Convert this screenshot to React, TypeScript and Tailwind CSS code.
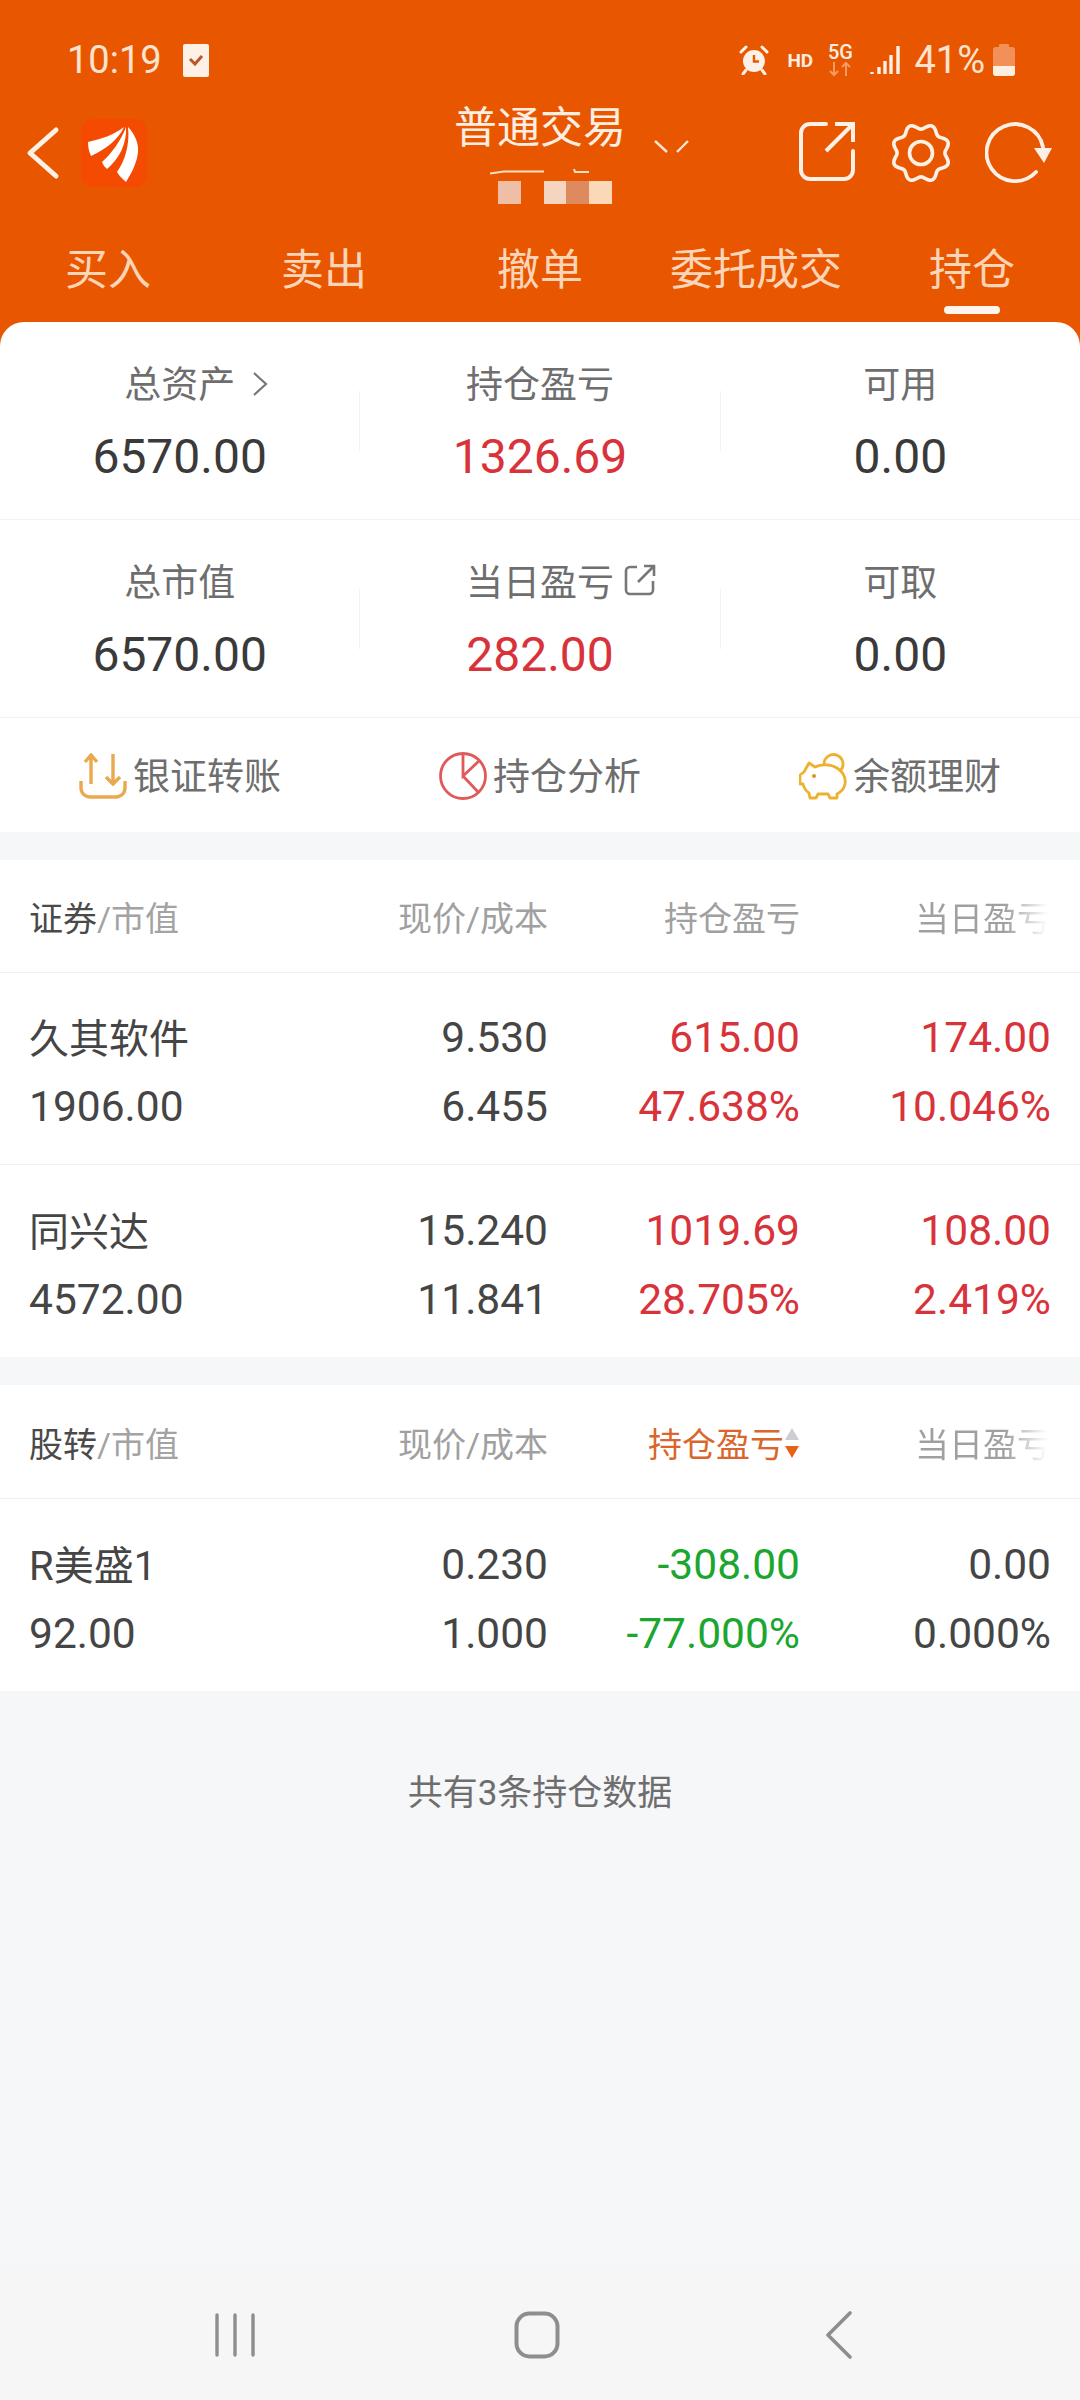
import React from 'react';

const FONT = "font-['Roboto','Noto_Sans_CJK_SC',sans-serif]";

// scalloped outline of the settings gear, 8 lobes
const gearPath = (() => {
  const pts: string[] = [];
  for (let i = 0; i < 160; i++) {
    const t = (i / 160) * Math.PI * 2;
    const r = 26.5 + 2.6 * Math.cos(8 * t + Math.PI);
    pts.push(`${(32 + r * Math.sin(t)).toFixed(2)} ${(32 - r * Math.cos(t)).toFixed(2)}`);
  }
  return `M${pts.join('L')}Z`;
})();

const StatusIcons: React.FC = () => (
  <div className="flex items-center">
    <svg width="30" height="30" viewBox="0 0 30 30" className="mr-[18px]">
      <circle cx="15" cy="16" r="11" fill="#fdf0e6" />
      <path d="M15 10v6.500h5" fill="none" stroke="#E85700" strokeWidth="2.400" />
      <path d="M2 7l5-5M28 7l-5-5M7 25l-3 4M23 25l3 4" stroke="#fdf0e6" strokeWidth="3" strokeLinecap="round" />
    </svg>
    <span className="mr-[15px] w-[26px] text-[19px] font-bold leading-none text-[#fdeee2]">HD</span>
    <div className="mr-[18px] flex w-[24px] flex-col items-center">
      <span className="text-[20px] font-medium leading-[17px] text-[#fdeee2]">5G</span>
      <svg width="24" height="16" viewBox="0 0 24 16">
        <path d="M6 1v13M2 10l4 4 4-4M18 15V2M14 6l4-4 4 4" fill="none" stroke="#f59a63" strokeWidth="2" />
      </svg>
    </div>
    <svg width="30" height="30" viewBox="0 0 30 30" className="mr-[14px]">
      <path d="M2 27v2M9 22v7M15 16v13M21 10v19M28 1v28" stroke="#fdeee2" strokeWidth="3.400" fill="none" />
    </svg>
    <span className="mr-[8px] text-[38px] leading-none text-[#fde3d0]">41%</span>
    <svg width="22" height="32" viewBox="0 0 22 32">
      <rect x="6" y="0" width="10" height="4" rx="1" fill="#f2905a" />
      <rect x="0" y="3" width="22" height="29" rx="3" fill="#f2905a" />
      <path d="M0 22h22v7a3 3 0 0 1-3 3H3a3 3 0 0 1-3-3z" fill="#fdeee2" />
    </svg>
  </div>
);

const Logo: React.FC = () => (
  <svg width="66" height="68" viewBox="0 0 66 68" className="rounded-[12px] bg-[#f54a02]">
    <path d="M7 23C20 20 33 16 43 8 38 20 25 30 10 37 8 33 7 28 7 23Z" fill="#fff" />
    <path d="M21 43C30 35 40 22 45 8c1 17-7 32-19 42-2-2-4-4-5-7Z" fill="#fff" />
    <path d="M36 53C44 42 49 25 47 8c7 7 11 17 10 25-1 11-7 22-12 30-3-3-7-6-9-10Z" fill="#fff" />
  </svg>
);

const Header: React.FC = () => {
  const tabs = ['买入', '卖出', '撤单', '委托成交', '持仓'];
  return (
    <div className="h-[346px] bg-[#E85700]">
      <div className="flex h-[104px] items-center justify-between pl-[67px] pr-[65px] pt-[16px]">
        <div className="flex items-center">
          <span className="text-[38px] leading-none text-[#fde3d0]">10:19</span>
          <span className="ml-[21px] flex h-[33px] w-[26px] items-center justify-center rounded-[2px] bg-[#fdf0e6]">
            <svg width="16" height="12" viewBox="0 0 16 12">
              <path d="M2 5l5 5 7-8" fill="none" stroke="#b8572a" strokeWidth="3" />
            </svg>
          </span>
        </div>
        <StatusIcons />
      </div>

      <div className="flex h-[98px] items-center pl-[26px]">
        <svg width="34" height="54" viewBox="0 0 34 54" className="mr-[21px]">
          <path d="M30 4L4 27l26 23" fill="none" stroke="#fdf0e6" strokeWidth="5" strokeLinecap="round" strokeLinejoin="round" />
        </svg>
        <Logo />
        <div className="ml-[307px] mt-[6px] flex w-[172px] flex-col items-center">
          <span className="text-[43px] leading-[40px] text-[#fdeee2]">普通交易</span>
          <svg width="100" height="7" viewBox="0 0 100 7" className="ml-[36px] mt-[20px] self-start">
            <path d="M0 5.500l14-2h40M84 1l1 3h14" fill="none" stroke="#fbdcc8" strokeWidth="2" />
          </svg>
          <div className="ml-[44px] mt-[6px] flex h-[23px] w-[114px] self-start">
            <span className="h-full w-[23px] bg-[#eebfa4]" />
            <span className="ml-[23px] h-full w-[22px] bg-[#f5d5c0]" />
            <span className="h-full w-[23px] bg-[#dc8a5e]" />
            <span className="h-full w-[23px] bg-[#fbd9b8]" />
          </div>
        </div>
        <svg width="36" height="14" viewBox="0 0 36 14" className="mb-[12px] ml-[27px]">
          <path d="M2 1l12 11M24 12L35 1" stroke="#fde3d0" strokeWidth="2.400" fill="none" />
        </svg>
        <svg width="58" height="64" viewBox="0 0 58 64" className="ml-[109px]">
          <path d="M28 3H12a9 9 0 0 0-9 9v37a9 9 0 0 0 9 9h34a9 9 0 0 0 9-9V30" fill="none" stroke="#fdf0e6" strokeWidth="4" strokeLinecap="round" />
          <path d="M28 30L54 4M37 3h18v18" fill="none" stroke="#fdf0e6" strokeWidth="4" />
        </svg>
        <svg width="64" height="64" viewBox="0 0 64 64" className="ml-[33px]">
          <path d={gearPath} fill="none" stroke="#fdf0e6" strokeWidth="3.600" strokeLinejoin="round" />
          <circle cx="32" cy="32" r="11.500" fill="none" stroke="#fdf0e6" strokeWidth="3.600" />
        </svg>
        <svg width="68" height="64" viewBox="0 0 68 64" className="ml-[32px]">
          <path d="M51 51A28.500 28.500 0 1 1 58 26" fill="none" stroke="#fdf0e6" strokeWidth="3.800" strokeLinecap="round" />
          <path d="M49 27h18l-8 15z" fill="#fdf0e6" />
        </svg>
      </div>

      <div className="grid h-[120px] grid-cols-5 items-center pt-[16px]">
        {tabs.map((t, i) => (
          <div key={t} className="relative flex justify-center">
            <span className="text-[43px] leading-none text-[#fcd4b8]">{t}</span>
            {i === 4 && (
              <span className="absolute left-1/2 top-[57px] h-[8px] w-[56px] -translate-x-1/2 rounded-full bg-[#fdf5ee]" />
            )}
          </div>
        ))}
      </div>
    </div>
  );
};

type Stat = { label: string; value: string; red?: boolean; extra?: React.ReactNode };

const StatRow: React.FC<{ items: Stat[] }> = ({ items }) => (
  <div className="flex h-[198px] items-center border-b border-[#f2f2f4]">
    {items.map((s, i) => (
      <React.Fragment key={s.label}>
        {i > 0 && <div className="h-[60px] w-px bg-[#f2f2f2]" />}
        <div className="flex flex-1 flex-col items-center pt-[4px]">
          <div className="relative flex h-[48px] items-center text-[37px] text-[#6e6e6e]">
            {s.label}
            {s.extra}
          </div>
          <div className={`mt-[20px] text-[48px] leading-[54px] ${s.red ? 'text-[#d8333b]' : 'text-[#3a3a3a]'}`}>{s.value}</div>
        </div>
      </React.Fragment>
    ))}
  </div>
);

const Actions: React.FC = () => (
  <div className="grid h-[114px] grid-cols-3 bg-white">
    <div className="flex items-center justify-center gap-[6px]">
      <svg width="48" height="46" viewBox="0 0 48 46" className="mt-[1px]">
        <path d="M2 28v7a9 9 0 0 0 9 9h26a9 9 0 0 0 9-9v-7" fill="none" stroke="#e9a94f" strokeWidth="3.400" />
        <path d="M12 31V2M6 9l6-7 6 7" fill="none" stroke="#e9a94f" strokeWidth="3.400" />
        <path d="M34 1v30M27 24l7 7 7-7" fill="none" stroke="#e9a94f" strokeWidth="3.400" />
      </svg>
      <span className="mt-[5px] text-[37px] text-[#6e6e6e]">银证转账</span>
    </div>
    <div className="flex items-center justify-center gap-[6px]">
      <svg width="48" height="48" viewBox="0 0 48 48" className="mt-[1px]">
        <circle cx="24" cy="24" r="22.500" fill="none" stroke="#e05a5c" strokeWidth="2.800" />
        <path d="M24 2v22L40 9M24 24l16 17" fill="none" stroke="#e05a5c" strokeWidth="2.800" />
      </svg>
      <span className="mt-[5px] text-[37px] text-[#6e6e6e]">持仓分析</span>
    </div>
    <div className="flex items-center justify-center gap-[6px]">
      <svg width="48" height="48" viewBox="0 0 48 48" className="mt-[1px]">
        <path d="M10 11l6 4c6-3 16-3 22 1 6 4 9 10 8 16-1 5-4 8-8 10v4h-7l-2-4H19l-2 4h-6l-1-5c-3-2-5-5-6-9H1v-9l4-3z" fill="none" stroke="#edb12e" strokeWidth="2.800" strokeLinejoin="round" />
        <path d="M25 12A9.500 9.500 0 1 1 41 19" fill="none" stroke="#edb12e" strokeWidth="2.800" />
        <circle cx="15" cy="24" r="2" fill="#d9942a" />
      </svg>
      <span className="mt-[5px] text-[37px] text-[#6e6e6e]">余额理财</span>
    </div>
  </div>
);

const COLS = 'grid grid-cols-[271px_248px_252px_251px] px-[29px]';

const TableHead: React.FC<{ first: string; active?: boolean }> = ({ first, active }) => (
  <div className={`${COLS} ${active ? 'h-[114px] pt-[8px]' : 'h-[113px] pt-[7px]'} items-center border-b border-[#f0f0f1] text-[34px]`}>
    <div className="text-[#a3a3a3]">
      <span className="text-[#4a4a4a]">{first}</span>/市值
    </div>
    <div className="text-right text-[#a0a0a0]">现价/成本</div>
    {active ? (
      <div className="relative text-right text-[#d9662b]">
        <span className="mr-[16px]">持仓盈亏</span>
        <svg width="16" height="32" viewBox="0 0 16 32" className="absolute right-0 top-[7px]">
          <path d="M8 1l7 12H1z" fill="#cfccd2" />
          <path d="M1 19h14l-7 12z" fill="#e8631a" />
        </svg>
      </div>
    ) : (
      <div className="text-right text-[#a0a0a0]">持仓盈亏</div>
    )}
    <div className="bg-linear-to-r from-[#a0a0a0] from-[205px] to-[#fafafa] to-[245px] bg-clip-text text-right text-transparent">
      当日盈亏
    </div>
  </div>
);

type Row = { name: string; cap: string; price: string; cost: string; pl: string; plp: string; day: string; dayp: string; plc: string; dayc: string };

const TableRow: React.FC<{ r: Row; last?: boolean }> = ({ r, last }) => (
  <div className={`${COLS} h-[192px] content-center gap-y-[24px] pt-[7px] text-[42.500px] leading-[45px] text-[#454545] ${last ? '' : 'border-b border-[#f0f0f1]'}`}>
    <div className="h-[45px] text-[40px] leading-[49px]">{r.name}</div>
    <div className="text-right">{r.price}</div>
    <div className={`text-right ${r.plc}`}>{r.pl}</div>
    <div className={`text-right ${r.dayc}`}>{r.day}</div>
    <div>{r.cap}</div>
    <div className="text-right">{r.cost}</div>
    <div className={`text-right ${r.plc}`}>{r.plp}</div>
    <div className={`text-right ${r.dayc}`}>{r.dayp}</div>
  </div>
);

const RED = 'text-[#d8333b]';
const GREEN = 'text-[#1aa62f]';

const App: React.FC = () => (
  <div className={`flex h-[2400px] w-[1080px] flex-col overflow-hidden bg-[#f6f7f9] ${FONT}`}>
    <Header />
    <div className="relative -mt-[24px] rounded-t-[24px] bg-white">
      <StatRow
        items={[
          {
            label: '总资产',
            value: '6570.00',
            extra: (
              <svg width="16" height="24" viewBox="0 0 16 24" className="absolute left-full top-[10px] ml-[17px]">
                <path d="M2 1l12 11L2 23" fill="none" stroke="#777" strokeWidth="2.200" />
              </svg>
            ),
          },
          { label: '持仓盈亏', value: '1326.69', red: true },
          { label: '可用', value: '0.00' },
        ]}
      />
      <StatRow
        items={[
          { label: '总市值', value: '6570.00' },
          {
            label: '当日盈亏',
            value: '282.00',
            red: true,
            extra: (
              <svg width="32" height="32" viewBox="0 0 32 32" className="absolute left-full top-[4px] ml-[10px]">
                <path d="M13 3H6a4 4 0 0 0-4 4v19a4 4 0 0 0 4 4h19a4 4 0 0 0 4-4v-9" fill="none" stroke="#777" strokeWidth="2.600" />
                <path d="M14 18L29 3M20 2h10v10" fill="none" stroke="#777" strokeWidth="2.600" />
              </svg>
            ),
          },
          { label: '可取', value: '0.00' },
        ]}
      />
      <Actions />
    </div>

    <div className="mt-[28px] bg-white">
      <TableHead first="证券" />
      <TableRow r={{ name: '久其软件', cap: '1906.00', price: '9.530', cost: '6.455', pl: '615.00', plp: '47.638%', day: '174.00', dayp: '10.046%', plc: RED, dayc: RED }} />
      <TableRow last r={{ name: '同兴达', cap: '4572.00', price: '15.240', cost: '11.841', pl: '1019.69', plp: '28.705%', day: '108.00', dayp: '2.419%', plc: RED, dayc: RED }} />
    </div>

    <div className="mt-[28px] bg-white">
      <TableHead first="股转" active />
      <TableRow last r={{ name: 'R美盛1', cap: '92.00', price: '0.230', cost: '1.000', pl: '-308.00', plp: '-77.000%', day: '0.00', dayp: '0.000%', plc: GREEN, dayc: 'text-[#454545]' }} />
    </div>

    <div className="mt-[78px] text-center text-[35px] leading-[50px] text-[#6e6e6e]">共有3条持仓数据</div>

    <div className="mt-auto flex h-[135px] items-center justify-center bg-[#f6f6f6] pr-[6px] pt-[4px]">
      <div className="flex w-[302px] justify-center">
        <svg width="44" height="44" viewBox="0 0 44 44">
          <path d="M4 2v40M22 2v40M40 2v40" stroke="#8e8e8e" strokeWidth="3.400" strokeLinecap="round" />
        </svg>
      </div>
      <div className="flex w-[302px] justify-center">
        <svg width="46" height="48" viewBox="0 0 46 48">
          <rect x="2.500" y="2.500" width="41" height="43" rx="13" fill="none" stroke="#8e8e8e" strokeWidth="4" />
        </svg>
      </div>
      <div className="flex w-[302px] justify-center">
        <svg width="28" height="48" viewBox="0 0 28 48">
          <path d="M25 2L3 24l22 22" fill="none" stroke="#8e8e8e" strokeWidth="3.600" strokeLinecap="round" strokeLinejoin="round" />
        </svg>
      </div>
    </div>
  </div>
);

export default App;
